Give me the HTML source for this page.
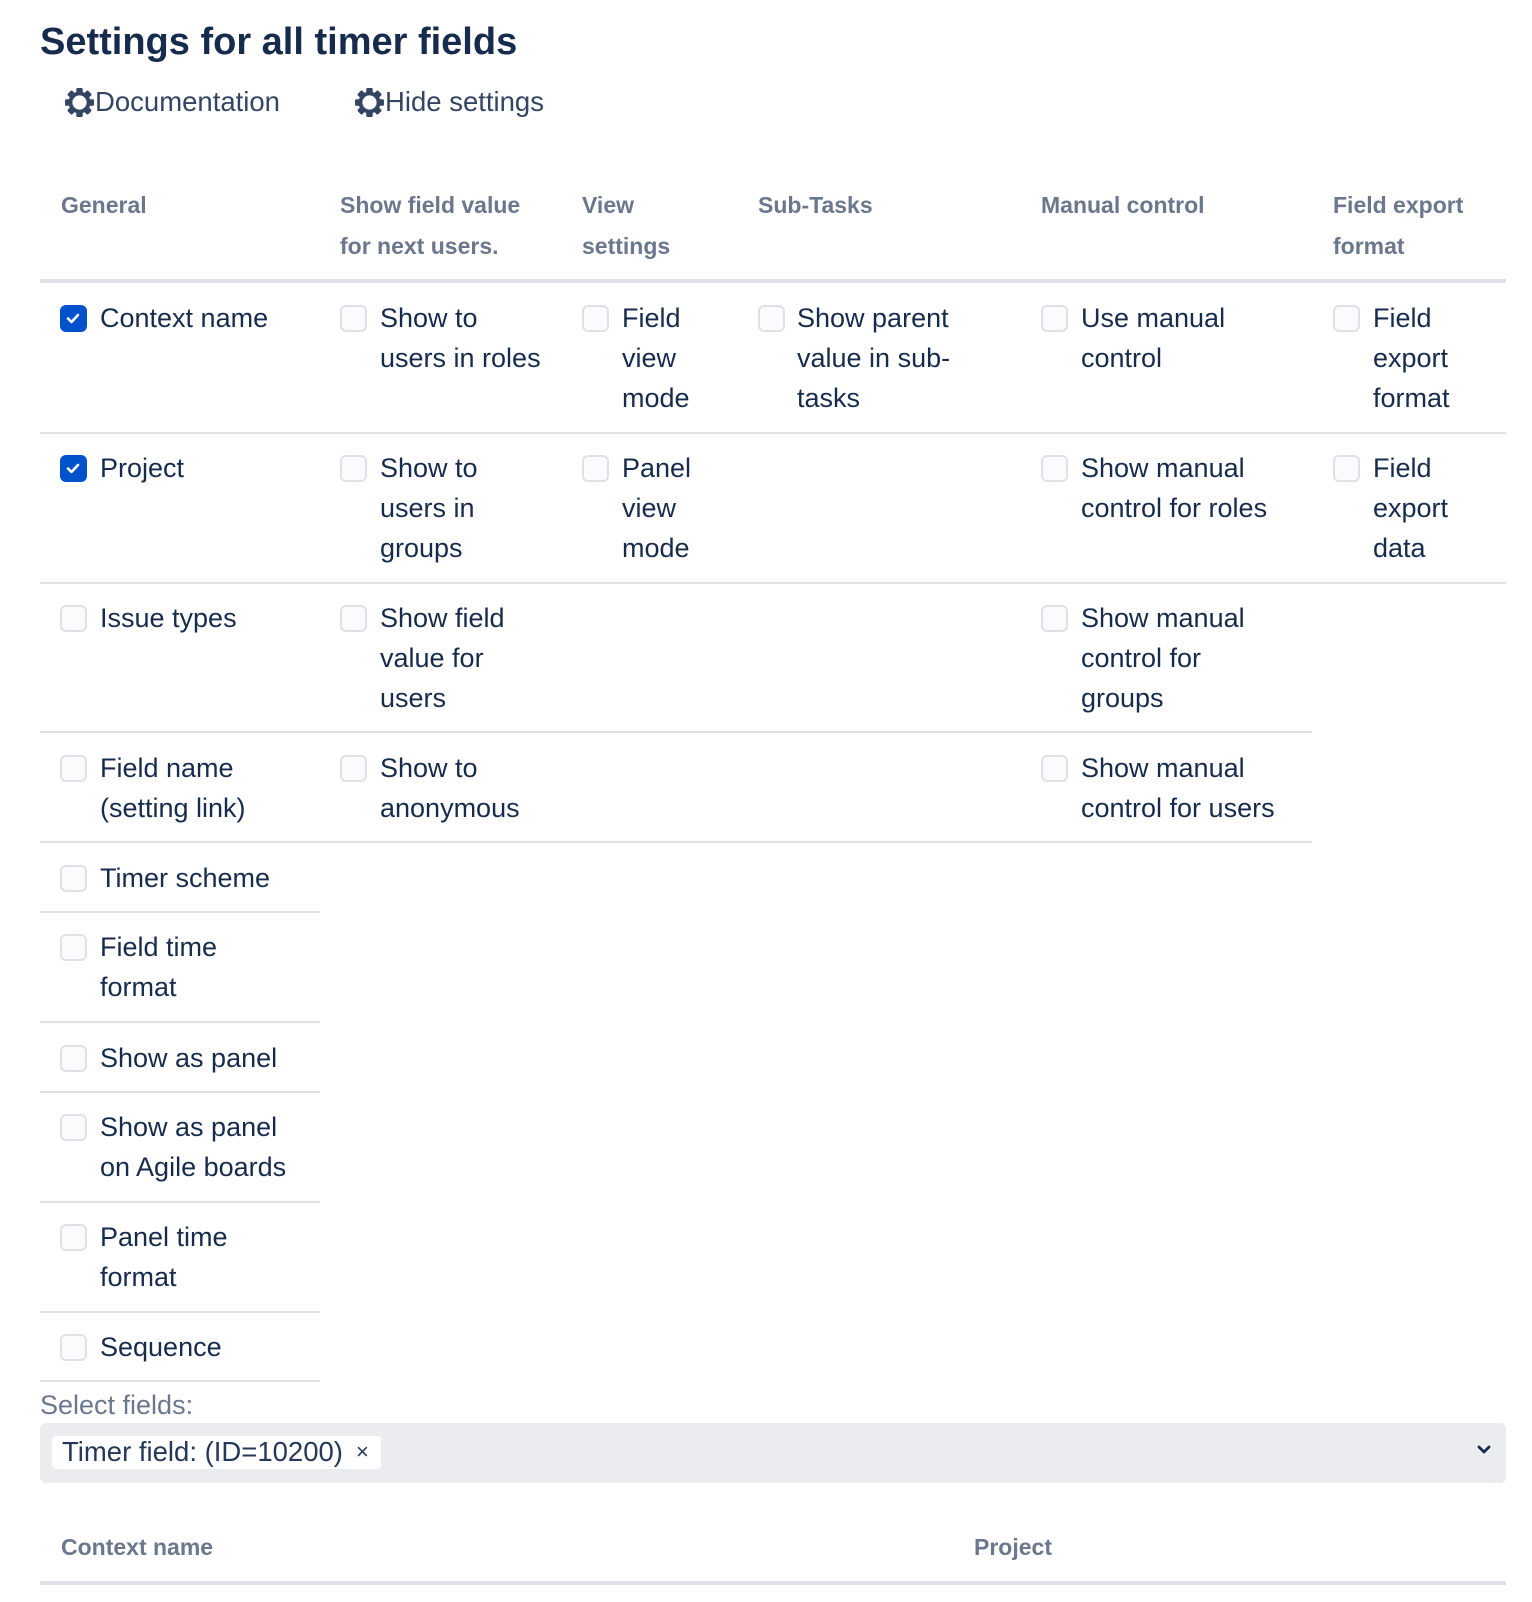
<!DOCTYPE html>
<html><head><meta charset="utf-8"><style>
*{margin:0;padding:0;box-sizing:border-box}
body{width:1532px;height:1602px;background:#fff;font-family:"Liberation Sans",Arial,sans-serif;color:#172b4d;position:relative;overflow:hidden}
.a{position:absolute;white-space:nowrap}
.t{font-size:27px;line-height:40px}
.h{font-size:23px;font-weight:bold;color:#6b778c;line-height:41px}
.cb{position:absolute;width:27px;height:27px;border:2.5px solid #dfe1e6;background:#fafbfc;border-radius:6px}
.cb.on{background:#0052cc;border-color:#0052cc}
.ln{position:absolute;height:2px;background:#dfe1e6}
</style></head><body>
<div class="a" style="left:40px;top:19px;font-size:38px;font-weight:bold;line-height:46px">Settings for all timer fields</div>

<svg class="a" style="left:64px;top:87px" width="31" height="31" viewBox="0 0 24 24"><g fill="#344563"><circle cx="12" cy="12" r="8.5"/><g id="tt"><rect x="9.5" y="0.8" width="5" height="4" rx="1"/><rect x="9.5" y="19.2" width="5" height="4" rx="1"/><rect x="0.8" y="9.5" width="4" height="5" rx="1"/><rect x="19.2" y="9.5" width="4" height="5" rx="1"/></g><use href="#tt" transform="rotate(45 12 12)"/></g><circle cx="12" cy="12" r="5.5" fill="#fff"/></svg>
<div class="a" style="left:95px;top:82px;font-size:27.5px;line-height:40px;color:#344563">Documentation</div>
<svg class="a" style="left:354px;top:87px" width="31" height="31" viewBox="0 0 24 24"><g fill="#344563"><circle cx="12" cy="12" r="8.5"/><use href="#tt"/><use href="#tt" transform="rotate(45 12 12)"/></g><circle cx="12" cy="12" r="5.5" fill="#fff"/></svg>
<div class="a" style="left:385px;top:82px;font-size:27.5px;line-height:40px;color:#344563">Hide settings</div>

<div class="a h" style="left:61px;top:185px">General</div>
<div class="a h" style="left:340px;top:185px">Show field value<br>for next users.</div>
<div class="a h" style="left:582px;top:185px">View<br>settings</div>
<div class="a h" style="left:758px;top:185px">Sub-Tasks</div>
<div class="a h" style="left:1041px;top:185px">Manual control</div>
<div class="a h" style="left:1333px;top:185px">Field export<br>format</div>
<div class="ln" style="left:40px;width:1466px;top:279px;height:4px"></div>

<div class="cb on" style="left:60px;top:305px"><svg width="22" height="22" viewBox="0 0 22 22" style="position:absolute;left:0;top:0"><path d="M6 11.5l3.5 3.5 6.5-7" stroke="#fff" stroke-width="2.6" fill="none" stroke-linecap="round" stroke-linejoin="round"/></svg></div>
<div class="a t" style="left:100px;top:298px">Context name</div>
<div class="cb" style="left:340px;top:305px"></div><div class="a t" style="left:380px;top:298px">Show to<br>users in roles</div>
<div class="cb" style="left:582px;top:305px"></div><div class="a t" style="left:622px;top:298px">Field<br>view<br>mode</div>
<div class="cb" style="left:758px;top:305px"></div><div class="a t" style="left:797px;top:298px">Show parent<br>value in sub-<br>tasks</div>
<div class="cb" style="left:1041px;top:305px"></div><div class="a t" style="left:1081px;top:298px">Use manual<br>control</div>
<div class="cb" style="left:1333px;top:305px"></div><div class="a t" style="left:1373px;top:298px">Field<br>export<br>format</div>
<div class="ln" style="left:40px;width:1466px;top:432px"></div>

<div class="cb on" style="left:60px;top:455px"><svg width="22" height="22" viewBox="0 0 22 22" style="position:absolute;left:0;top:0"><path d="M6 11.5l3.5 3.5 6.5-7" stroke="#fff" stroke-width="2.6" fill="none" stroke-linecap="round" stroke-linejoin="round"/></svg></div>
<div class="a t" style="left:100px;top:448px">Project</div>
<div class="cb" style="left:340px;top:455px"></div><div class="a t" style="left:380px;top:448px">Show to<br>users in<br>groups</div>
<div class="cb" style="left:582px;top:455px"></div><div class="a t" style="left:622px;top:448px">Panel<br>view<br>mode</div>
<div class="cb" style="left:1041px;top:455px"></div><div class="a t" style="left:1081px;top:448px">Show manual<br>control for roles</div>
<div class="cb" style="left:1333px;top:455px"></div><div class="a t" style="left:1373px;top:448px">Field<br>export<br>data</div>
<div class="ln" style="left:40px;width:1466px;top:582px"></div>

<div class="cb" style="left:60px;top:605px"></div><div class="a t" style="left:100px;top:598px">Issue types</div>
<div class="cb" style="left:340px;top:605px"></div><div class="a t" style="left:380px;top:598px">Show field<br>value for<br>users</div>
<div class="cb" style="left:1041px;top:605px"></div><div class="a t" style="left:1081px;top:598px">Show manual<br>control for<br>groups</div>
<div class="ln" style="left:40px;width:1272px;top:731px"></div>

<div class="cb" style="left:60px;top:755px"></div><div class="a t" style="left:100px;top:748px">Field name<br>(setting link)</div>
<div class="cb" style="left:340px;top:755px"></div><div class="a t" style="left:380px;top:748px">Show to<br>anonymous</div>
<div class="cb" style="left:1041px;top:755px"></div><div class="a t" style="left:1081px;top:748px">Show manual<br>control for users</div>
<div class="ln" style="left:40px;width:1272px;top:841px"></div>

<div class="cb" style="left:60px;top:865px"></div><div class="a t" style="left:100px;top:858px">Timer scheme</div>
<div class="ln" style="left:40px;width:280px;top:911px"></div>
<div class="cb" style="left:60px;top:934px"></div><div class="a t" style="left:100px;top:927px">Field time<br>format</div>
<div class="ln" style="left:40px;width:280px;top:1021px"></div>
<div class="cb" style="left:60px;top:1045px"></div><div class="a t" style="left:100px;top:1038px">Show as panel</div>
<div class="ln" style="left:40px;width:280px;top:1091px"></div>
<div class="cb" style="left:60px;top:1114px"></div><div class="a t" style="left:100px;top:1107px">Show as panel<br>on Agile boards</div>
<div class="ln" style="left:40px;width:280px;top:1201px"></div>
<div class="cb" style="left:60px;top:1224px"></div><div class="a t" style="left:100px;top:1217px">Panel time<br>format</div>
<div class="ln" style="left:40px;width:280px;top:1311px"></div>
<div class="cb" style="left:60px;top:1334px"></div><div class="a t" style="left:100px;top:1327px">Sequence</div>
<div class="ln" style="left:40px;width:280px;top:1380px"></div>

<div class="a" style="left:40px;top:1385px;font-size:27px;line-height:40px;color:#6b778c">Select fields:</div>
<div class="a" style="left:40px;top:1423px;width:1466px;height:60px;background:#ebecf0;border-radius:6px"></div>
<div class="a" style="left:52px;top:1436px;width:329px;height:33px;background:#fff;border-radius:4px"></div>
<div class="a" style="left:62px;top:1432px;font-size:27.5px;line-height:40px;color:#253858">Timer field: (ID=10200)</div>
<div class="a" style="left:356px;top:1434px;font-size:22px;line-height:36px;color:#253858">×</div>
<svg class="a" style="left:1476px;top:1444px" width="16" height="12" viewBox="0 0 16 12"><path d="M3 3l5 5 5-5" stroke="#172b4d" stroke-width="2.8" fill="none" stroke-linecap="round" stroke-linejoin="round"/></svg>

<div class="a h" style="left:61px;top:1527px">Context name</div>
<div class="a h" style="left:974px;top:1527px">Project</div>
<div class="ln" style="left:40px;width:1466px;top:1581px;height:4px"></div>
</body></html>
